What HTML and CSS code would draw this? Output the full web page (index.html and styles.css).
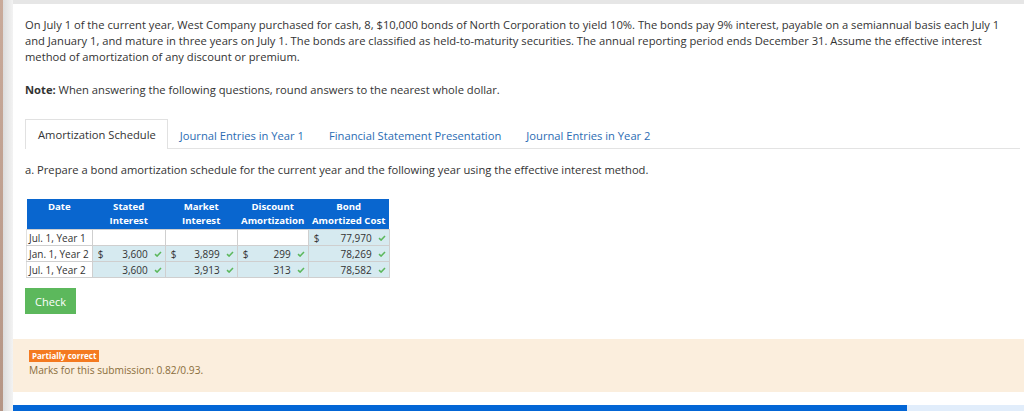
FILE: index.html
```html
<!DOCTYPE html>
<html>
<head>
<meta charset="utf-8">
<link rel="stylesheet" href="styles.css">
</head>
<body>
<div class="edge"></div>
<div class="gutter"></div>
<div class="main">
  <div class="content">
    <p class="para">On July 1 of the current year, West Company purchased for cash, 8, $10,000 bonds of North Corporation to yield 10%. The bonds pay 9% interest, payable on a semiannual basis each July 1 and January 1, and mature in three years on July 1. The bonds are classified as held-to-maturity securities. The annual reporting period ends December 31. Assume the effective interest method of amortization of any discount or premium.</p>
    <p class="note"><b>Note:</b> When answering the following questions, round answers to the nearest whole dollar.</p>
    <div class="tabs">
      <div class="tab active">Amortization Schedule</div>
      <div class="tab">Journal Entries in Year 1</div>
      <div class="tab">Financial Statement Presentation</div>
      <div class="tab">Journal Entries in Year 2</div>
    </div>
    <p class="prompt">a. Prepare a bond amortization schedule for the current year and the following year using the effective interest method.</p>
    <table class="sched">
      <thead>
        <tr>
          <th class="c-date">Date<br>&nbsp;</th>
          <th class="c-stated">Stated<br>Interest</th>
          <th class="c-market">Market<br>Interest</th>
          <th class="c-disc">Discount<br>Amortization</th>
          <th class="c-bond">Bond<br>Amortized Cost</th>
        </tr>
      </thead>
      <tbody>
        <tr>
          <td class="date">Jul. 1, Year 1</td>
          <td class="empty"></td>
          <td class="empty"></td>
          <td class="empty"></td>
          <td class="val"><span class="cur">$</span><span class="num">77,970</span><svg class="ok" viewBox="0 0 10 8"><path d="M1 4.2 L3.8 6.8 L9 1.2" /></svg></td>
        </tr>
        <tr>
          <td class="date">Jan. 1, Year 2</td>
          <td class="val"><span class="cur">$</span><span class="num">3,600</span><svg class="ok" viewBox="0 0 10 8"><path d="M1 4.2 L3.8 6.8 L9 1.2" /></svg></td>
          <td class="val"><span class="cur">$</span><span class="num">3,899</span><svg class="ok" viewBox="0 0 10 8"><path d="M1 4.2 L3.8 6.8 L9 1.2" /></svg></td>
          <td class="val"><span class="cur">$</span><span class="num">299</span><svg class="ok" viewBox="0 0 10 8"><path d="M1 4.2 L3.8 6.8 L9 1.2" /></svg></td>
          <td class="val"><span class="cur"></span><span class="num">78,269</span><svg class="ok" viewBox="0 0 10 8"><path d="M1 4.2 L3.8 6.8 L9 1.2" /></svg></td>
        </tr>
        <tr>
          <td class="date">Jul. 1, Year 2</td>
          <td class="val"><span class="cur"></span><span class="num">3,600</span><svg class="ok" viewBox="0 0 10 8"><path d="M1 4.2 L3.8 6.8 L9 1.2" /></svg></td>
          <td class="val"><span class="cur"></span><span class="num">3,913</span><svg class="ok" viewBox="0 0 10 8"><path d="M1 4.2 L3.8 6.8 L9 1.2" /></svg></td>
          <td class="val"><span class="cur"></span><span class="num">313</span><svg class="ok" viewBox="0 0 10 8"><path d="M1 4.2 L3.8 6.8 L9 1.2" /></svg></td>
          <td class="val"><span class="cur"></span><span class="num">78,582</span><svg class="ok" viewBox="0 0 10 8"><path d="M1 4.2 L3.8 6.8 L9 1.2" /></svg></td>
        </tr>
      </tbody>
    </table>
    <button class="check">Check</button>
  </div>
  <div class="feedback">
    <div class="badge">Partially correct</div>
    <div class="marks">Marks for this submission: 0.82/0.93.</div>
  </div>
  <div class="progress"><div class="progress-fill"></div></div>
</div>
</body>
</html>
```

FILE: styles.css
```css
html, body {
  margin: 0;
  padding: 0;
  height: 411px;
  overflow: hidden;
}
body {
  display: flex;
  font-family: "Open Sans", "Liberation Sans", sans-serif;
  color: #333;
  background: #fff;
}
.edge {
  width: 3px;
  background: linear-gradient(#c9aa9a, #b59585);
}
.gutter {
  width: 10px;
  background: linear-gradient(90deg, #dcdcdc, #f3f3f3);
}
.main {
  flex: 1;
  border-top: 4px solid #e6e6e6;
  display: flex;
  flex-direction: column;
}
.content {
  padding: 13px 4px 0 12px;
}
.para, .note, .prompt {
  margin: 0;
  font-size: 11.2px;
  line-height: 16px;
}
.para {
  margin-right: 10px;
}
.note {
  margin-top: 17px;
}
.note b {
  font-weight: 700;
}
.tabs {
  margin-top: 21px;
  display: flex;
  align-items: flex-end;
  border-bottom: 1px solid #e3e3e3;
  height: 29px;
}
.tab {
  font-size: 11.2px;
  color: #2b6cb3;
  padding: 0 12px 0 11px;
  height: 28px;
  line-height: 29px;
  border: 1px solid transparent;
  border-bottom: none;
  margin-bottom: -1px;
}
.tab.active {
  color: #333;
  background: #fff;
  border-color: #e1e1e1;
  height: 29px;
  padding: 0 11px 0 12px;
}
.prompt {
  margin-top: 13px;
}
.sched {
  margin-top: 21px;
  margin-left: 1px;
  border-collapse: collapse;
  font-size: 10px;
  line-height: 14px;
}
.sched th {
  background: #0966cf;
  color: #fff;
  font-weight: 700;
  font-size: 9.6px;
  padding: 1px 0;
  text-align: center;
  height: 28px;
  box-sizing: border-box;
  vertical-align: top;
}
.c-date { width: 64px; }
.c-stated { width: 73px; }
.c-market { width: 72px; }
.c-disc { width: 71px; }
.c-bond { width: 81px; }
.sched td {
  height: 15px;
  padding: 0 3px 0 3px;
  border: 1px solid #cfcfcf;
  white-space: nowrap;
  color: #333;
}
.sched td.date {
  background: #fff;
  text-align: left;
  padding-left: 2px;
  border-left: 1px solid #e0e0e0;
}
.sched td.empty {
  background: #fff;
}
.sched td.val {
  background: #d6eaf0;
}
.val {
  position: relative;
}
.cur {
  float: left;
  width: 8px;
  padding-left: 2px;
}
.num {
  float: right;
  margin-right: 14px;
}
.ok {
  position: absolute;
  right: 3px;
  top: 5px;
  width: 8px;
  height: 6px;
  fill: none;
  stroke: #5cb85c;
  stroke-width: 2;
}
.check {
  display: block;
  margin-top: 10px;
  width: 51px;
  height: 26px;
  background: #5cb85c;
  border: none;
  border-radius: 0;
  color: #fff;
  font-family: "Open Sans", "Liberation Sans", sans-serif;
  font-size: 11px;
  padding: 0;
}
.feedback {
  margin-top: 25px;
  background: #fbeedd;
  height: 53px;
  box-sizing: border-box;
  padding: 11px 16px 0 16px;
}
.badge {
  width: fit-content;
  background: #f47a20;
  color: #fff;
  font-size: 8px;
  font-weight: 700;
  line-height: 12px;
  padding: 0 3px;
}
.marks {
  font-size: 10.2px;
  line-height: 16px;
  color: #8a6d3b;
}
.progress {
  margin-top: 13px;
  height: 6px;
  background: #e1edfb;
}
.progress-fill {
  width: 894px;
  height: 100%;
  background: #0366d6;
}
```
